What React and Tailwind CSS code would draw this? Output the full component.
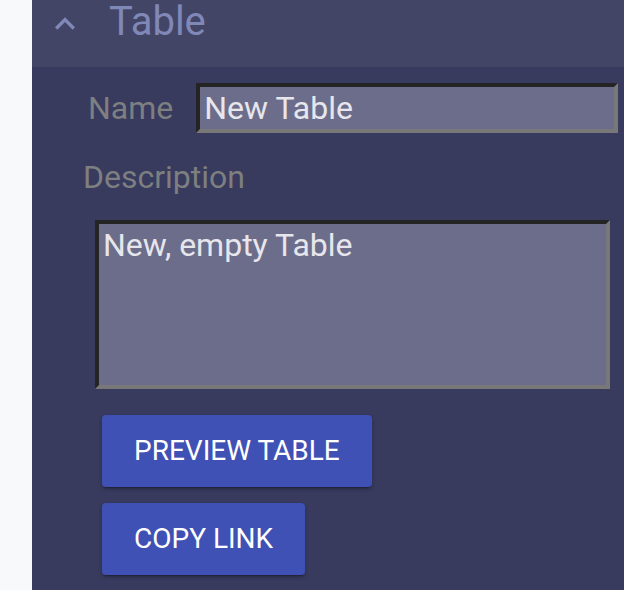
export default function App() {
  return (
    <div className="flex min-h-[590px] bg-[#f8f9fb] font-['Roboto',sans-serif]">
      <div className="w-[32px] shrink-0" />

      <div className="flex flex-1 flex-col bg-[#383a5e]">
        {/* Section header */}
        <div className="flex h-[67px] items-start bg-[#434566] pl-[13px]">
          <svg viewBox="0 0 24 24" className="mt-[4px] h-[40px] w-[40px] fill-[#8088b8]">
            <path d="M12 8l-6 6 1.41 1.41L12 10.83l4.59 4.58L18 14z" />
          </svg>
          <span className="ml-[24px] mt-[2px] text-[40px] leading-[40px] text-[#8088b8]">Table</span>
        </div>

        {/* Name */}
        <div className="mt-[16px] flex items-center pl-[56px]">
          <label className="text-[32px] leading-[normal] text-[#7d7f80]">Name</label>
          <input
            className="ml-[23px] h-[50px] w-[422px] border-[4px] border-t-[#242424] border-l-[#242424] border-b-[#787878] border-r-[#787878] bg-[#6c6d8a] px-[4px] text-[32px] leading-[normal] text-[#e6e6ec] outline-none"
            defaultValue="New Table"
          />
        </div>

        {/* Description */}
        <label className="ml-[51px] mt-[25px] text-[32px] leading-[normal] text-[#7d7f80]">Description</label>
        <textarea
          className="ml-[63px] mt-[24px] h-[169px] w-[515px] resize-none border-[4px] border-t-[#242424] border-l-[#242424] border-b-[#787878] border-r-[#787878] bg-[#6c6d8a] px-[4px] py-[2px] text-[32px] leading-[normal] text-[#e6e6ec] outline-none"
          defaultValue="New, empty Table"
        />

        {/* Actions */}
        <div className="ml-[70px] mt-[26px] flex flex-col items-start gap-[16px]">
          <button className="h-[72px] rounded-[4px] bg-[#3f51b5] px-[32px] text-[28px] text-white shadow-[0_3px_2px_-2px_rgba(0,0,0,0.35),0_2px_4px_rgba(0,0,0,0.2)]">
            PREVIEW TABLE
          </button>
          <button className="h-[72px] rounded-[4px] bg-[#3f51b5] px-[32px] text-[28px] text-white shadow-[0_3px_2px_-2px_rgba(0,0,0,0.35),0_2px_4px_rgba(0,0,0,0.2)]">
            COPY LINK
          </button>
        </div>
      </div>
    </div>
  );
}
